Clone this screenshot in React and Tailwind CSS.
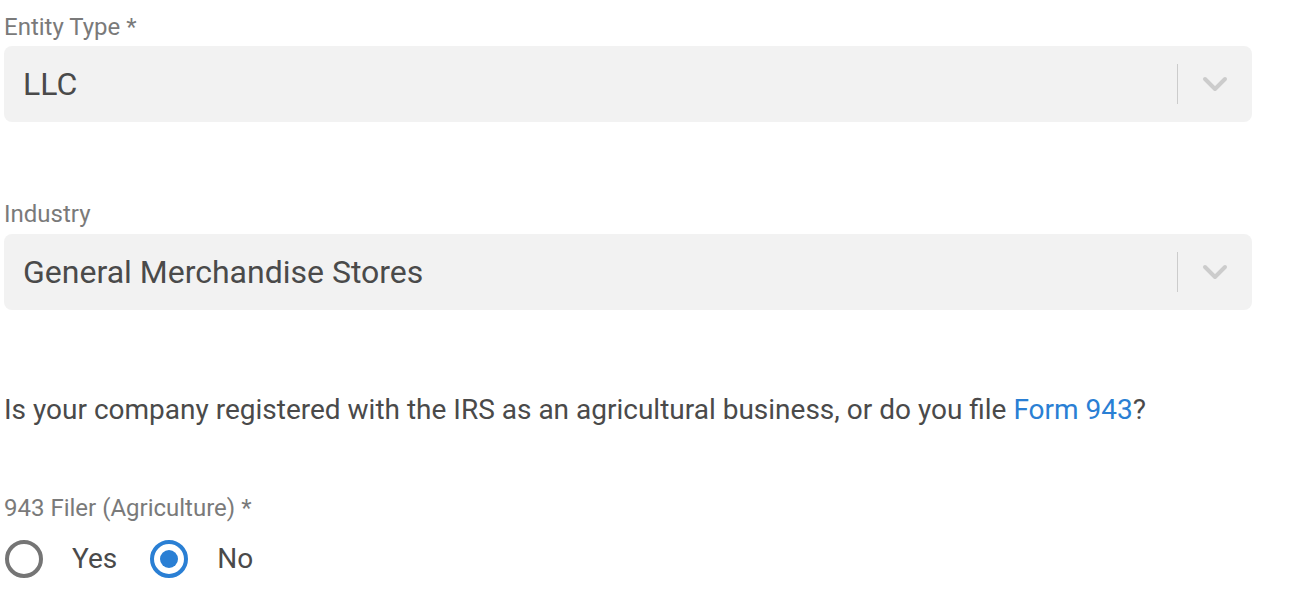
import React, { useState } from 'react';

const Chevron = () => (
  <svg width="26" height="16" viewBox="0 0 26 16" fill="none">
    <path d="M3 3l10 10 10-10" stroke="#cccccc" strokeWidth="4" strokeLinecap="round" strokeLinejoin="round" />
  </svg>
);

const SelectBox = ({ value }) => (
  <div className="flex h-[76px] w-[1248px] items-center rounded-lg bg-[#f2f2f2] pl-[19px]">
    <span className="flex-1 text-[32px] text-[#4a4a4a]">{value}</span>
    <div className="h-[40px] w-px bg-[#cccccc]"></div>
    <div className="flex w-[74px] items-center justify-center">
      <Chevron />
    </div>
  </div>
);

const Radio = ({ checked, label, onClick }) => (
  <button type="button" onClick={onClick} className="flex items-center">
    <span
      className={`flex h-[38px] w-[38px] items-center justify-center rounded-full border-4 ${
        checked ? 'border-[#2a7fd4]' : 'border-[#757575]'
      }`}
    >
      {checked && <span className="h-[18px] w-[18px] rounded-full bg-[#2a7fd4]"></span>}
    </span>
    <span className="ml-[29px] text-[28px] leading-[38px] text-[#4a4a4a]">{label}</span>
  </button>
);

export default function App() {
  const [filer, setFiler] = useState('no');

  return (
    <div className="min-h-screen bg-white px-1 pt-[13px] font-['Roboto',sans-serif]">
      {/* Entity type */}
      <div className="flex flex-col">
        <label className="mb-[5px] text-[24px] leading-[28px] text-[#7a7a7a]">Entity Type *</label>
        <SelectBox value="LLC" />
      </div>

      {/* Industry */}
      <div className="mt-[78px] flex flex-col">
        <label className="mb-[6px] text-[24px] leading-[28px] text-[#7a7a7a]">Industry</label>
        <SelectBox value="General Merchandise Stores" />
      </div>

      <p className="mt-[84px] text-[28px] leading-[32px] text-[#4a4a4a]">
        Is your company registered with the IRS as an agricultural business, or do you file{' '}
        <a href="#" className="text-[#2a7fd4]">Form 943</a>?
      </p>

      {/* 943 filer */}
      <div className="mt-[68px] flex flex-col">
        <label className="text-[24px] leading-[28px] text-[#7a7a7a]">943 Filer (Agriculture) *</label>
        <div className="mt-[18px] flex items-center gap-[33px] pl-px">
          <Radio checked={filer === 'yes'} label="Yes" onClick={() => setFiler('yes')} />
          <Radio checked={filer === 'no'} label="No" onClick={() => setFiler('no')} />
        </div>
      </div>
    </div>
  );
}
